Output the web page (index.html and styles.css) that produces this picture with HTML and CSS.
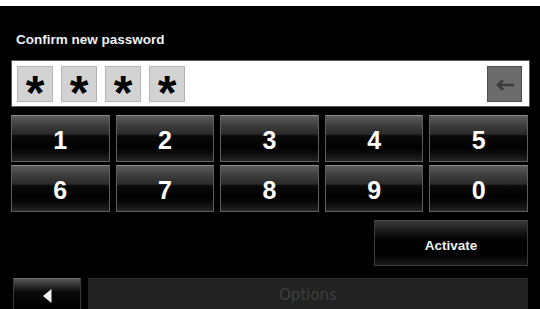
FILE: index.html
```html
<!DOCTYPE html>
<html>
<head>
<meta charset="utf-8">
<link rel="stylesheet" href="styles.css">
</head>
<body>
<div class="top-strip"></div>
<div class="screen">
  <div class="title">Confirm new password</div>
  <div class="entry">
    <div class="stars">
      <div class="star"><span>*</span></div>
      <div class="star"><span>*</span></div>
      <div class="star"><span>*</span></div>
      <div class="star"><span>*</span></div>
    </div>
    <div class="backspace">
      <svg width="20" height="12" viewBox="0 0 20 12"><path d="M19 6H3M8 1.2L3 6l5 4.8" fill="none" stroke="#3b3b3b" stroke-width="2.6"/></svg>
    </div>
  </div>
  <div class="keypad">
    <div class="key">1</div>
    <div class="key">2</div>
    <div class="key">3</div>
    <div class="key">4</div>
    <div class="key">5</div>
    <div class="key">6</div>
    <div class="key">7</div>
    <div class="key">8</div>
    <div class="key">9</div>
    <div class="key">0</div>
  </div>
  <div class="action-row">
    <div class="activate">Activate</div>
  </div>
  <div class="bottom-bar">
    <div class="back">
      <svg width="9" height="14" viewBox="0 0 9 14"><polygon points="8.5,0 0,7 8.5,14" fill="#f2f2f2"/></svg>
    </div>
    <div class="options">Options</div>
  </div>
</div>
</body>
</html>
```
FILE: styles.css
```css
html, body {
  margin: 0;
  padding: 0;
  background: #000;
  width: 540px;
  height: 309px;
  overflow: hidden;
  font-family: "Liberation Sans", Arial, sans-serif;
}

.top-strip {
  height: 6px;
  background: #fff;
}

.screen {
  display: flex;
  flex-direction: column;
}

.title {
  margin-top: 26px;
  margin-left: 16px;
  height: 16px;
  line-height: 16px;
  font-size: 13.5px;
  font-weight: bold;
  color: #eef0f4;
}

.entry {
  margin: 12px 10px 0 11px;
  height: 47px;
  box-sizing: border-box;
  border: 1px solid #5a5a5a;
  background: #fff;
  display: flex;
  align-items: flex-start;
  padding: 5px 7px 0 5px;
}

.stars {
  display: flex;
  gap: 8px;
}

.star {
  width: 36px;
  height: 36px;
  box-sizing: border-box;
  background: #d3d3d3;
  border: 1px solid #b3b3b3;
  display: flex;
  justify-content: center;
  align-items: flex-start;
}

.star span {
  display: block;
  font-size: 48px;
  font-weight: bold;
  line-height: 34px;
  height: 34px;
  padding-top: 9px;
  box-sizing: border-box;
  color: #000;
}

.backspace {
  margin-left: auto;
  width: 35px;
  height: 36px;
  box-sizing: border-box;
  background: #6c6c6c;
  border: 1px solid #4d4d4d;
  display: flex;
  align-items: center;
  justify-content: center;
  padding-top: 1px;
}

.keypad {
  margin: 8px 12px 0 11px;
  display: grid;
  grid-template-columns: repeat(5, 1fr);
  grid-auto-rows: 47px;
  column-gap: 6px;
  row-gap: 3px;
}

.key {
  box-sizing: border-box;
  border: 1px solid #5e5e5e;
  border-top-color: #8a8a8a;
  background: linear-gradient(#5c5c5c 0%, #3e3e3e 20%, #2a2a2a 40%, #0a0a0a 44%, #000 70%, #141414 90%, #262626 100%);
  display: flex;
  align-items: center;
  justify-content: center;
  padding-top: 4px;
  color: #fff;
  font-size: 25px;
  font-weight: bold;
  line-height: 25px;
}

.action-row {
  margin: 8px 12px 0 0;
  display: flex;
  justify-content: flex-end;
}

.activate {
  width: 154px;
  height: 46px;
  box-sizing: border-box;
  border: 1px solid #3c3c3c;
  border-top-color: #4a4a4a;
  background: linear-gradient(#3a3a3a 0%, #161616 25%, #000 45%, #000 75%, #1a1a1a 100%);
  display: flex;
  align-items: center;
  justify-content: center;
  padding-top: 5px;
  color: #f2f2f2;
  font-size: 13.5px;
  font-weight: bold;
}

.bottom-bar {
  margin: 12px 12px 0 13px;
  display: flex;
  gap: 7px;
  height: 31px;
}

.back {
  width: 68px;
  box-sizing: border-box;
  border: 1px solid #3a3a3a;
  border-top-color: #6a6a6a;
  border-bottom: none;
  background: linear-gradient(#555 0%, #2a2a2a 25%, #080808 45%, #000 100%);
  display: flex;
  align-items: center;
  justify-content: center;
  padding-top: 4px;
}

.options {
  flex: 1;
  box-sizing: border-box;
  background: #222;
  border-top: 1px solid #2e2e2e;
  display: flex;
  align-items: center;
  justify-content: center;
  color: #404040;
  font-family: "DejaVu Sans", sans-serif;
  font-size: 15px;
  padding-top: 1px;
}
```
